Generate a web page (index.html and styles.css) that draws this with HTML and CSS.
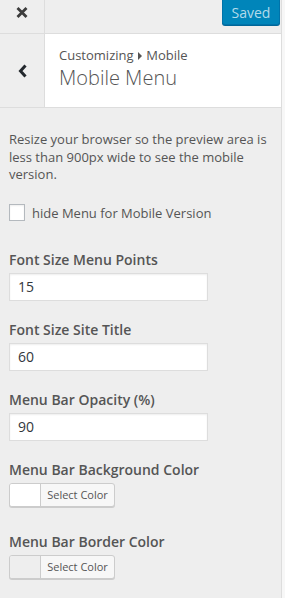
FILE: index.html
```html
<!DOCTYPE html>
<html>
    <head>
        <meta charset="utf-8">
        <title>Mobile Menu - Customizing</title>
        <link rel="stylesheet" href="styles.css">
    </head>
    <body>
        <div class="panel">
            <div class="topbar">
                <a class="close-btn" href="#">
                    <svg width="12" height="11" viewBox="0 0 12 11"><path d="M1.5 1 L10.5 10 M10.5 1 L1.5 10" stroke="#3c3c3c" stroke-width="2.8"/></svg>
                </a>
                <button class="save-btn" disabled>Saved</button>
            </div>

            <div class="section-head">
                <a class="back-btn" href="#">
                    <svg width="10" height="14" viewBox="0 0 10 14"><path d="M7.5 1.5 L2.5 7 L7.5 12.5" fill="none" stroke="#23282d" stroke-width="3"/></svg>
                </a>
                <div class="section-title">
                    <span class="crumb">Customizing <i class="arrow"></i> Mobile</span>
                    <h3>Mobile Menu</h3>
                </div>
            </div>

            <div class="controls">
                <p class="description">Resize your browser so the preview area is less than 900px wide to see the mobile version.</p>

                <label class="check-row">
                    <input type="checkbox">
                    <span>hide Menu for Mobile Version</span>
                </label>

                <div class="control">
                    <span class="control-title">Font Size Menu Points</span>
                    <input type="text" value="15">
                </div>

                <div class="control">
                    <span class="control-title">Font Size Site Title</span>
                    <input type="text" value="60">
                </div>

                <div class="control">
                    <span class="control-title">Menu Bar Opacity (%)</span>
                    <input type="text" value="90">
                </div>

                <div class="control color-control">
                    <span class="control-title">Menu Bar Background Color</span>
                    <button class="color-btn"><span class="swatch swatch-white"></span><span class="color-text">Select Color</span></button>
                </div>

                <div class="control color-control">
                    <span class="control-title">Menu Bar Border Color</span>
                    <button class="color-btn"><span class="swatch"></span><span class="color-text">Select Color</span></button>
                </div>
            </div>
        </div>
    </body>
</html>
```

FILE: styles.css
```css
* {
    margin: 0;
    padding: 0;
    box-sizing: border-box;
    font-family: 'Open Sans', 'Liberation Sans', sans-serif;
}

body {
    background: #f7f7f7;
    width: 285px;
    height: 598px;
    overflow: hidden;
}

.panel {
    width: 282px;
    min-height: 598px;
    background: #eee;
    border-right: 1px solid #ddd;
    color: #555;
}

.topbar {
    display: flex;
    justify-content: space-between;
    height: 34px;
    border-bottom: 1px solid #ddd;
}

.close-btn {
    display: flex;
    align-items: flex-start;
    justify-content: center;
    padding-top: 7px;
    width: 45px;
    border-right: 1px solid #ddd;
}

.save-btn {
    margin: -3px 1px 0 0;
    height: 28px;
    width: 58px;
    padding-top: 2px;
    background: #0085ba;
    border: 1px solid #0073aa;
    border-radius: 3px;
    box-shadow: 0 1px 0 #006799;
    color: #b3dbea;
    font-size: 14px;
}

.section-head {
    display: flex;
    height: 74px;
    border-bottom: 1px solid #ddd;
}

.back-btn {
    display: flex;
    align-items: center;
    justify-content: center;
    width: 45px;
    border-right: 1px solid #ddd;
    padding-left: 1px;
}

.section-title {
    flex: 1;
    background: #fff;
    padding: 12px 14px;
}

.crumb {
    display: block;
    font-size: 13px;
    line-height: 18px;
    color: #555;
}

.arrow {
    display: inline-block;
    border-left: 4px solid #555;
    border-top: 4px solid transparent;
    border-bottom: 4px solid transparent;
    margin: 0 1px;
}

.section-title h3 {
    font-size: 20px;
    font-weight: 300;
    line-height: 28px;
    color: #555;
}

.controls {
    padding: 23px 9px 0;
}

.description {
    font-size: 13px;
    line-height: 17.5px;
    margin-bottom: 20px;
}

.check-row {
    display: flex;
    align-items: center;
    gap: 7px;
    font-size: 13px;
    margin-bottom: 28px;
}

.check-row input {
    appearance: none;
    width: 16px;
    height: 17px;
    background: #fff;
    border: 1px solid #b4b9be;
    box-shadow: inset 0 1px 2px rgba(0,0,0,0.07);
}

.control {
    margin-bottom: 19px;
}

.control-title {
    display: block;
    font-size: 14px;
    font-weight: 600;
    line-height: 20px;
    margin-bottom: 3px;
}

.control input[type=text] {
    display: block;
    width: 199px;
    height: 28px;
    padding: 0 8px;
    background: #fff;
    border: 1px solid #ddd;
    box-shadow: inset 0 1px 2px rgba(0,0,0,0.07);
    color: #32373c;
    font-size: 14px;
}

.color-control {
    margin-bottom: 25px;
}

.color-btn {
    display: flex;
    height: 24px;
    width: 106px;
    background: #f7f7f7;
    border: 1px solid #ccc;
    border-radius: 3px;
    box-shadow: 0 1px 0 #ccc;
    overflow: hidden;
}

.swatch {
    width: 31px;
    height: 100%;
    background: #eee;
    border-right: 1px solid #ccc;
}

.swatch-white {
    background: #fff;
}

.color-text {
    flex: 1;
    font-size: 11px;
    line-height: 22px;
    color: #555;
}
```
